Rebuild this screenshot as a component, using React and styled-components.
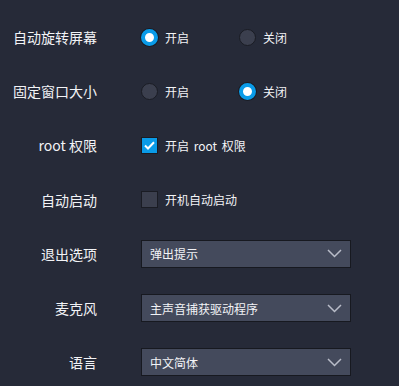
import React, { useState } from 'react'
import styled, { createGlobalStyle } from 'styled-components'

const GlobalStyle = createGlobalStyle`
  html, body {
    margin: 0;
    padding: 0;
    background: #262a38;
  }
  body {
    font-family: "Microsoft YaHei", "Noto Sans CJK SC", "Noto Sans", sans-serif;
    color: #f2f3f6;
  }
`;

const Panel = styled.div`
  width: 399px;
  height: 386px;
  padding-top: 10px;
  box-sizing: border-box;
  background: #262a38;
`;

const Row = styled.div`
  display: flex;
  align-items: center;
  height: 54.2px;
`;

const Label = styled.div`
  width: 97px;
  text-align: right;
  font-size: 14px;
  margin-right: 44px;
  white-space: nowrap;
`;

const Options = styled.div`
  display: flex;
  align-items: center;
`;

const Option = styled.label`
  display: flex;
  align-items: center;
  min-width: 98px;
  font-size: 12px;
  cursor: pointer;
  word-spacing: 2px;
`;

const RadioDot = styled.span`
  box-sizing: border-box;
  width: 17px;
  height: 17px;
  border-radius: 50%;
  margin-right: 7px;
  border: ${p => (p.$on ? '4px solid #0a9be8' : '1px solid #1a1c24')};
  background: ${p => (p.$on ? '#ffffff' : '#3b3f4e')};
  box-shadow: ${p => (p.$on ? '0 0 0 1px #1a1c24' : 'none')};
`;

const Box = styled.span`
  box-sizing: border-box;
  width: 17px;
  height: 17px;
  margin-right: 7px;
  display: flex;
  align-items: center;
  justify-content: center;
  border: 1px solid #1a1c24;
  background: ${p => (p.$on ? '#0a9be8' : '#3b3f4e')};
`;

const Select = styled.div`
  box-sizing: border-box;
  width: 210px;
  height: 28px;
  display: flex;
  align-items: center;
  justify-content: space-between;
  padding: 0 8px;
  background: #444a5c;
  border: 1px solid #171920;
  font-size: 12px;
  cursor: pointer;
`;

function Radio({ options, value, onChange }) {
  return (
    <Options>
      {options.map(o => (
        <Option key={o} onClick={() => onChange(o)}>
          <RadioDot $on={value === o} />
          {o}
        </Option>
      ))}
    </Options>
  );
}

function Check({ text, on, onChange }) {
  return (
    <Option onClick={() => onChange(!on)}>
      <Box $on={on}>
        {on && (
          <svg width="11" height="9" viewBox="0 0 11 9">
            <path d="M1 4.5 L4 7.5 L10 1.2" fill="none" stroke="#fff" strokeWidth="2" />
          </svg>
        )}
      </Box>
      {text}
    </Option>
  );
}

function Dropdown({ value }) {
  return (
    <Select>
      <span>{value}</span>
      <svg width="15" height="9" viewBox="0 0 15 9">
        <path d="M1 1 L7.5 7.5 L14 1" fill="none" stroke="#b9bdc9" strokeWidth="1.5" />
      </svg>
    </Select>
  );
}

export default function App() {
  const [rotate, setRotate] = useState('开启');
  const [fixed, setFixed] = useState('关闭');
  const [root, setRoot] = useState(true);
  const [boot, setBoot] = useState(false);

  return (
    <>
      <GlobalStyle />
      <Panel>
        <Row>
          <Label>自动旋转屏幕</Label>
          <Radio options={['开启', '关闭']} value={rotate} onChange={setRotate} />
        </Row>
        <Row>
          <Label>固定窗口大小</Label>
          <Radio options={['开启', '关闭']} value={fixed} onChange={setFixed} />
        </Row>
        <Row>
          <Label>root 权限</Label>
          <Check text="开启 root 权限" on={root} onChange={setRoot} />
        </Row>
        <Row>
          <Label>自动启动</Label>
          <Check text="开机自动启动" on={boot} onChange={setBoot} />
        </Row>
        <Row>
          <Label>退出选项</Label>
          <Dropdown value="弹出提示" />
        </Row>
        <Row>
          <Label>麦克风</Label>
          <Dropdown value="主声音捕获驱动程序" />
        </Row>
        <Row>
          <Label>语言</Label>
          <Dropdown value="中文简体" />
        </Row>
      </Panel>
    </>
  );
}
